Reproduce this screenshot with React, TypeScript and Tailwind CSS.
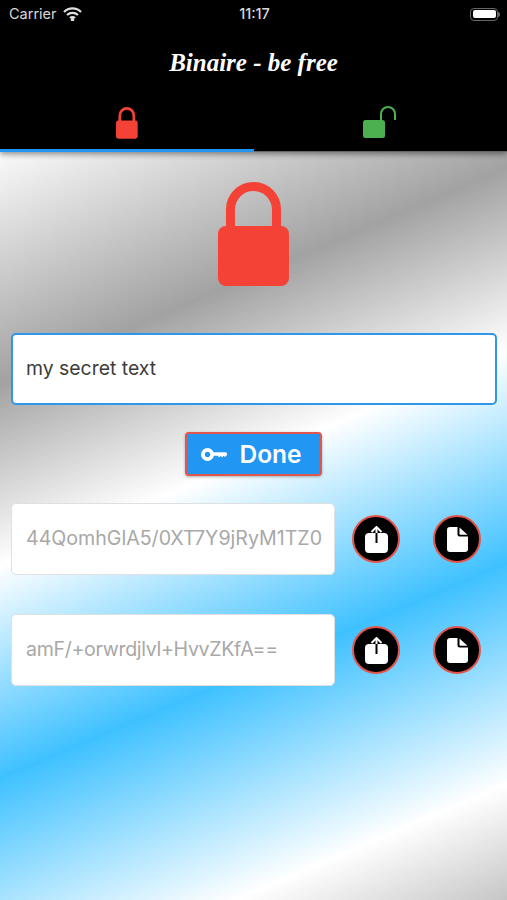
import React from "react";

function LockIcon({ className }: { className?: string }) {
  return (
    <svg className={className} viewBox="0 0 72 105" fill="none">
      <path d="M12.500 50V27.500a23 23 0 0 1 46 0V50" stroke="#f44336" strokeWidth="9" />
      <rect x="0" y="44" width="71" height="60" rx="8" fill="#f44336" />
    </svg>
  );
}

function OpenLockIcon({ className }: { className?: string }) {
  return (
    <svg className={className} viewBox="0 0 34 33" fill="none">
      <path d="M18 16V8a7 7 0 0 1 14 0V14" stroke="#4caf50" strokeWidth="2" />
      <rect x="0" y="14" width="22" height="18" rx="2.500" fill="#4caf50" />
    </svg>
  );
}

function KeyIcon() {
  return (
    <svg width="26" height="13" viewBox="0 0 26 13" fill="none">
      <circle cx="6.500" cy="6.500" r="4.600" stroke="white" strokeWidth="3.800" />
      <path d="M11 4.300H24.500a1.500 1.500 0 0 1 1.500 1.500V7l-2 2-1.300-1.200L21 9.500l-1.300-1.700L18 9.500l-1.400-1.700H11z" fill="white" />
    </svg>
  );
}

function ShareIcon() {
  return (
    <svg width="23" height="27" viewBox="0 0 23 27" fill="none">
      <rect x="0" y="7" width="23" height="20" rx="4" fill="white" />
      <path d="M11.500 17V1.500" stroke="black" strokeWidth="2" />
      <path d="M6.500 6L11.500 1l5 5" stroke="white" strokeWidth="2" />
      <path d="M11.500 1.500V7" stroke="white" strokeWidth="2" />
    </svg>
  );
}

function FileIcon() {
  return (
    <svg width="21" height="25" viewBox="0 0 21 25" fill="none">
      <path d="M3 0H10.500V7.500a2 2 0 0 0 2 2H21V22a3 3 0 0 1-3 3H3a3 3 0 0 1-3-3V3a3 3 0 0 1 3-3z" fill="white" />
      <path d="M12.500 0.500L20.500 7.800H13.500a1 1 0 0 1-1-1z" fill="white" />
    </svg>
  );
}

function RoundButton({ children }: { children: React.ReactNode }) {
  return (
    <button className="flex h-[48px] w-[48px] items-center justify-center rounded-full border-2 border-[#e5534b] bg-black">
      {children}
    </button>
  );
}

function OutputRow({ value, textClass }: { value: string; textClass?: string }) {
  return (
    <div className="flex items-center">
      <div className="flex h-[72px] w-[324px] items-center overflow-hidden rounded-[5px] border border-[#e0e0e0] bg-white pl-[14px] text-[19.6px] text-[#a8a8a8]">
        <span className={"whitespace-nowrap " + (textClass ?? "")}>{value}</span>
      </div>
      <div className="ml-[17px] flex gap-[33px]">
        <RoundButton>
          <ShareIcon />
        </RoundButton>
        <RoundButton>
          <FileIcon />
        </RoundButton>
      </div>
    </div>
  );
}

export default function App() {
  return (
    <div className="flex h-[900px] w-[507px] flex-col overflow-hidden bg-black font-['Inter',sans-serif]">
      <div className="flex h-[27px] shrink-0 items-center justify-between pl-[9px] pr-[7px] pt-[1px] text-[14.5px] text-[#d8d8d8]">
        <div className="flex w-[100px] items-center gap-[6px]">
          <span>Carrier</span>
          <svg width="19" height="14" viewBox="0 0 19 14" fill="none" stroke="#e0e0e0" strokeWidth="2.200">
            <path d="M1 5a12 12 0 0 1 17 0" />
            <path d="M4 8a8 8 0 0 1 11 0" />
            <path d="M7 11a3.600 3.600 0 0 1 5 0" />
            <circle cx="9.500" cy="12.500" r="0.700" fill="#e0e0e0" />
          </svg>
        </div>
        <span className="font-medium">11:17</span>
        <div className="flex w-[100px] items-center justify-end">
          <div className="flex h-[13px] w-[28px] items-center rounded-[4px] border border-[#666] p-[1.500px]">
            <div className="h-full w-full rounded-[2px] bg-white" />
          </div>
          <div className="h-[5px] w-[2px] rounded-r-sm bg-[#666]" />
        </div>
      </div>

      <div className="flex h-[72px] shrink-0 items-center justify-center">
        <h1 className="font-['Liberation_Serif',serif] text-[25px] font-bold italic text-white">Binaire - be free</h1>
      </div>

      <div className="relative z-10 flex h-[53px] shrink-0 shadow-[0_2px_6px_rgba(0,0,0,0.45)]">
        <div className="flex w-1/2 items-start justify-center border-b-[3px] border-[#2196f3] pt-[8px]">
          <LockIcon className="h-[32px] w-[22px]" />
        </div>
        <div className="flex w-1/2 items-start justify-center border-b border-[#666] pt-[7px]">
          <OpenLockIcon className="h-[33px] w-[34px]" />
        </div>
      </div>

      <main className="flex flex-1 flex-col bg-[linear-gradient(157deg,#fafafa_0%,#a2a2a2_24%,#ffffff_43%,#3fc1ff_65%,#ffffff_88%,#c6c6c6_100%)] px-[11px]">
        <div className="flex justify-center pt-[30px]">
          <LockIcon className="h-[105px] w-[72px]" />
        </div>

        <div className="mt-[46px] flex h-[72px] w-[486px] items-center rounded-[5px] border-2 border-[#2f96ea] bg-white pl-[13px] text-[19.4px] text-[#3c3c3c]">
          my secret text
        </div>

        <div className="mt-[27px] flex justify-center">
          <button className="flex h-[44px] w-[137px] items-center justify-center gap-[12px] rounded-[4px] border-2 border-[#e0564c] bg-[#2196f3] pr-[4px] text-[24.5px] font-semibold text-white shadow-[0_1px_3px_rgba(0,0,0,0.3)]">
            <KeyIcon />
            Done
          </button>
        </div>

        <div className="mt-[27px] flex flex-col gap-[39px]">
          <OutputRow value="44QomhGlA5/0XT7Y9jRyM1TZ0" />
          <OutputRow value="amF/+orwrdjlvl+HvvZKfA==" textClass="tracking-[-0.33px]" />
        </div>
      </main>
    </div>
  );
}
